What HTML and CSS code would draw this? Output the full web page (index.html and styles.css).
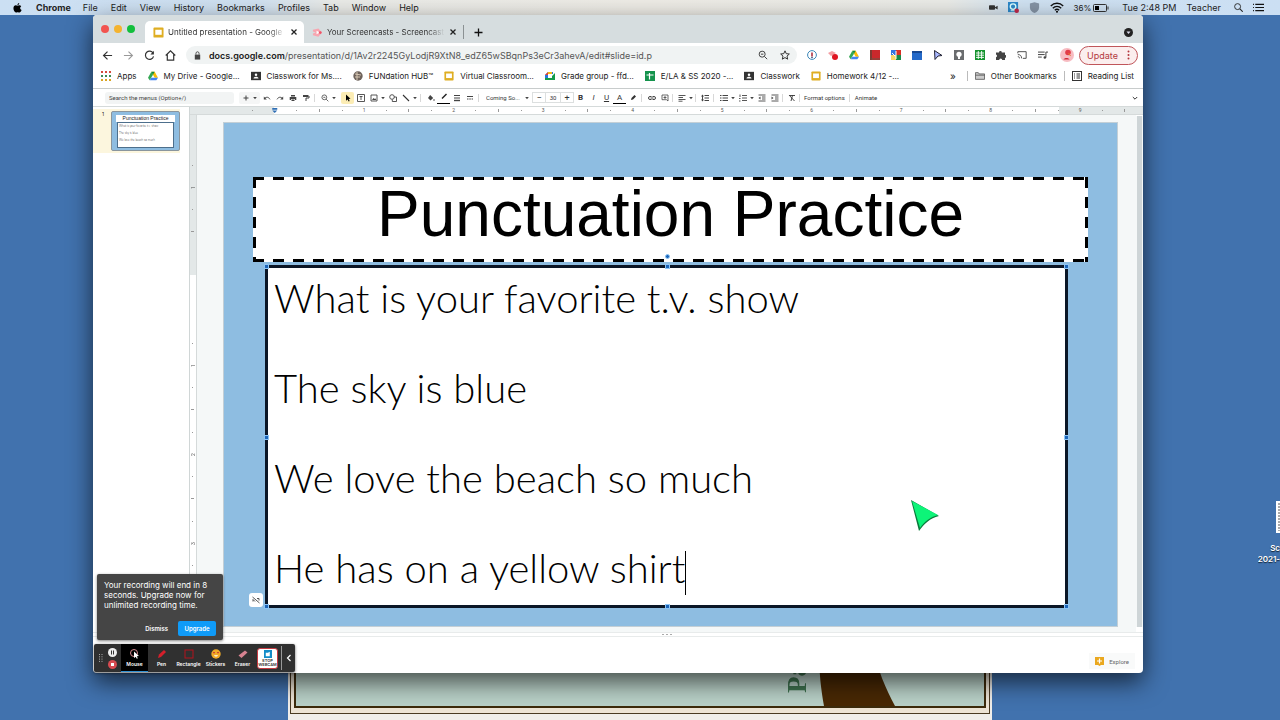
FILE: index.html
```html
<!DOCTYPE html>
<html lang="en">
<head>
    <meta charset="UTF-8">
    <meta name="viewport" content="width=device-width, initial-scale=1.0">
    <title>Untitled presentation - Google Slides</title>
    <link rel="stylesheet" href="styles.css">
</head>
<body>
    <!-- Shared icons -->
    <svg class="sprite" aria-hidden="true">
        <symbol id="i-slides" viewBox="0 0 12 12"><rect x="0.5" y="0.5" width="11" height="11" rx="1" fill="#dfae22"/><rect x="2.5" y="3" width="7" height="5.5" fill="#fff"/></symbol>
        <symbol id="i-class" viewBox="0 0 12 12"><rect y="1" width="12" height="10" fill="#333"/><circle cx="6" cy="4.6" r="1.5" fill="#fff"/><path d="M3 9c0-3 6-3 6 0z" fill="#fff"/></symbol>
        <symbol id="i-drive" viewBox="0 0 12 12"><path d="M4 1h4l4 7H8z" fill="#fbbc04"/><path d="M4 1l2 3.5L2 11 0 8z" fill="#34a853"/><path d="M4 8h8l-2 3H2z" fill="#4285f4"/><path d="M4 1h4L6 4.5z" fill="#0f8b43"/></symbol>
        <symbol id="i-close" viewBox="0 0 8 8"><path d="M1.5 1.5l5 5M6.5 1.5l-5 5" stroke="#222" stroke-width="1.3"/></symbol>
        <symbol id="i-caret" viewBox="0 0 6 6"><path d="M1.2 2h3.6L3 4.2z" fill="#444"/></symbol>
        <symbol id="i-zoom" viewBox="0 0 12 12"><circle cx="5" cy="5" r="3.6" fill="none" stroke="#444" stroke-width="1.2"/><path d="M7.7 7.7L11 11M3.5 5h3" stroke="#444" stroke-width="1.2"/></symbol>
    </svg>

    <header class="menubar">
        <nav class="menubar-left">
            <svg class="apple" viewBox="0 0 12 14"><path d="M8.4 0C8.5 1.6 7.3 3 5.9 3.1 5.8 1.6 7 .2 8.4 0zM6 3.9c.8 0 1.4-.6 2.6-.6 1.1 0 2 .5 2.6 1.4-2.2 1.3-1.9 4.3.5 5.2-.6 1.7-1.8 3.5-3.1 3.5-.9 0-1.3-.6-2.400-.6s-1.500.6-2.400.6C2 13.400.3 10.200.3 7.500c0-2.600 1.600-4.200 3.300-4.200 1 0 1.700.6 2.400.6z"/></svg>
            <b>Chrome</b><span>File</span><span>Edit</span><span>View</span><span>History</span><span>Bookmarks</span><span>Profiles</span><span>Tab</span><span>Window</span><span>Help</span>
        </nav>
        <div class="menubar-right">
            <svg class="ic9" viewBox="0 0 12 10"><g fill="#333"><rect y="2" width="8" height="6" rx="1"/><path d="M8 4.500l3.500-2v5L8 5.500z"/></g></svg>
            <svg class="ic12" viewBox="0 0 12 12"><rect width="11" height="11" fill="#2b87c8"/><circle cx="5.500" cy="5" r="3" fill="none" stroke="#dff" stroke-width="1.500"/><path d="M3 9.500h5" stroke="#dff"/><circle cx="9.500" cy="9.500" r="2.500" fill="#c0284a"/></svg>
            <svg class="ic12" viewBox="0 0 12 12"><path d="M1 1.500L6 .3l5 1.200V6c0 3-2.500 5-5 6-2.500-1-5-3-5-6z" fill="#8493a5"/></svg>
            <svg class="ic14" viewBox="0 0 14 11"><g fill="none" stroke="#111" stroke-width="1.400"><path d="M.8 4c3.500-3.600 8.900-3.600 12.400 0M2.800 6.200c2.400-2.400 6-2.400 8.400 0M4.800 8.300c1.300-1.200 3.100-1.200 4.400 0"/></g><circle cx="7" cy="9.800" r="1"/></svg>
            <span class="power">36%
                <svg class="battery" viewBox="0 0 16 8"><rect x=".5" y=".5" width="13" height="7" rx="1" fill="none" stroke="#333"/><rect x="2" y="2" width="4" height="4"/><path d="M15 2.500v3" stroke="#333"/></svg>
            </span>
            <span>Tue 2:48 PM</span>
            <span class="user">Teacher</span>
            <svg class="ic9" viewBox="0 0 10 10"><circle cx="4" cy="4" r="3.300" fill="none" stroke="#222"/><path d="M6.500 6.500L9.700 9.700" stroke="#222" stroke-width="1.200"/></svg>
            <svg class="ic12" viewBox="0 0 12 10"><path d="M0 1.500h1M0 5h1M0 8.500h1M2.500 1.500H12M2.500 5H12M2.500 8.500H12" stroke="#111" stroke-width="1.300"/></svg>
        </div>
    </header>

    <!-- Document lying behind the browser -->
    <div class="poster">
        <div class="poster-line">
            <div class="poster-art">
                <svg class="trunk" viewBox="0 0 80 57"><path d="M0 0c0 24 2 40 5 57h71C67 40 58 20 55 0z" fill="#482804"/></svg>
                <span class="poster-text">Pa</span>
            </div>
        </div>
    </div>

    <div class="desktop-file">
        <svg viewBox="0 0 12 32"><rect width="12" height="32" fill="#fff"/><path d="M3 2v28M4 5h8M4 9h8M4 13h8M4 17h8M4 21h8M4 25h8" stroke="#555" stroke-dasharray="2 1"/></svg>
        <span>Sc</span><span>2021-</span>
    </div>

    <main class="window">
        <div class="tabstrip">
            <div class="lights"><i class="red"></i><i class="yellow"></i><i class="green"></i></div>
            <div class="tab active">
                <svg class="ic12"><use href="#i-slides"/></svg>
                <span class="tab-title">Untitled presentation - Google</span>
                <button aria-label="Close tab"><svg class="ic8"><use href="#i-close"/></svg></button>
            </div>
            <div class="tab">
                <svg class="ic12" viewBox="0 0 12 12"><path d="M1 3l6-1.500L11 6 7 10.500 1 9V7l3-1-3-1z" fill="#f7a6b0"/><path d="M5 4l3.500 2L5 8z" fill="#fff"/><circle cx="9" cy="6" r="1.500" fill="#ee5468"/></svg>
                <span class="tab-title">Your Screencasts - Screencast</span>
                <button aria-label="Close tab"><svg class="ic8"><use href="#i-close"/></svg></button>
            </div>
            <button class="new-tab" aria-label="New tab"><svg class="ic9" viewBox="0 0 9 9"><path d="M4.500.5v8M.5 4.500h8" stroke="#111" stroke-width="1.300"/></svg></button>
            <button class="tab-search" aria-label="Search tabs"><svg class="ic9" viewBox="0 0 9 9"><circle cx="4.500" cy="4.500" r="4.500" fill="#222"/><path d="M2.500 3.500h4l-2 2.600z" fill="#dde"/></svg></button>
        </div>

        <div class="address-row">
            <button aria-label="Back"><svg class="ic12" viewBox="0 0 12 12"><path d="M11 6H2M6 1.700L1.700 6 6 10.300" fill="none" stroke="#333" stroke-width="1.300"/></svg></button>
            <button aria-label="Forward"><svg class="ic12" viewBox="0 0 12 12"><path d="M1 6h9M6 1.700L10.300 6 6 10.300" fill="none" stroke="#999" stroke-width="1.200"/></svg></button>
            <button aria-label="Reload"><svg class="ic12" viewBox="0 0 12 12"><path d="M10 3.500A4.500 4.500 0 1 0 10.400 7" fill="none" stroke="#333" stroke-width="1.300"/><path d="M10.800.8v4H7z" fill="#333"/></svg></button>
            <button aria-label="Home"><svg class="ic12" viewBox="0 0 12 12"><path d="M.8 6L6 1l5.200 5M2.500 5v6h7V5" fill="none" stroke="#333" stroke-width="1.300"/></svg></button>
            <div class="omnibox">
                <svg class="ic9" viewBox="0 0 9 10"><rect x="1.500" y="4" width="6" height="5.500" fill="#444"/><path d="M2.800 4V2.500c0-2.200 3.400-2.200 3.400 0V4" fill="none" stroke="#444"/></svg>
                <span class="url"><b>docs.google.com</b>/presentation/d/1Av2r2245GyLodjR9XtN8_edZ65wSBqnPs3eCr3ahevA/edit#slide=id.p</span>
                <svg class="ic10"><use href="#i-zoom"/></svg>
                <svg class="ic10" viewBox="0 0 12 12"><path d="M6 1l1.500 3.400 3.700.4-2.800 2.500.8 3.700L6 9.100 2.800 11l.8-3.700L.8 4.800l3.700-.4z" fill="none" stroke="#333" stroke-width="1.200"/></svg>
            </div>
            <div class="extensions">
                <svg class="ic10" viewBox="0 0 10 10"><circle cx="5" cy="5" r="4.400" fill="#fff" stroke="#3c87b8"/><path d="M5 2.500v4" stroke="#a23" stroke-width="1.500"/><circle cx="5" cy="7.500" r=".8" fill="#247"/></svg>
                <svg class="ic10" viewBox="0 0 10 10"><path d="M0 3l4-2 4 2-5 3z" fill="#f39da2"/><circle cx="7" cy="7" r="3" fill="#df1420"/></svg>
                <svg class="ic10"><use href="#i-drive"/></svg>
                <svg class="ic10" viewBox="0 0 10 10"><path d="M0 0h10v10H0z" fill="#c9282c"/><path d="M0 0h2v10H0z" fill="#7c3a32"/><path d="M1 9h9" stroke="#654"/></svg>
                <svg class="ic10" viewBox="0 0 10 10"><path d="M0 0h5v5H0z" fill="#3474df"/><path d="M5 0h5v5H5z" fill="#d93025"/><path d="M0 5h5v5H0z" fill="#f8d568"/><path d="M5 5h5v5H5z" fill="#188a48"/><path d="M1 3l3 3M5 1v8" stroke="#fff"/></svg>
                <svg class="ic10" viewBox="0 0 10 10"><path d="M0 1h10v9H0z" fill="#2469c9"/><path d="M0 1h10v2H0z" fill="#174892"/></svg>
                <svg class="ic10" viewBox="0 0 10 10"><path d="M1.500.5l7.500 5-4 .5-3 3.500z" fill="#a9b8ff" stroke="#223"/></svg>
                <svg class="ic10" viewBox="0 0 10 10"><path d="M0 0h10v10H0z" fill="#6a6c6e"/><circle cx="5" cy="4.300" r="2.600" fill="#fff"/><path d="M4 6h2v3H4z" fill="#fff"/></svg>
                <svg class="ic10" viewBox="0 0 10 10"><path d="M0 0h10v10H0z" fill="#15932e"/><path d="M1 3h8M1 5.200h8M1 7.400h8M3.300 1v8M6.600 1v8" stroke="#fff" stroke-width=".9"/></svg>
                <svg class="ic10" viewBox="0 0 10 10"><path d="M0 2.500h3a1.400 1.400 0 1 1 2.800 0H9v2.700a1.400 1.400 0 1 1 0 2.400V10H6.200a1.500 1.500 0 0 0-3 0H0V7.300a1.400 1.400 0 0 0 0-2.700z" fill="#444"/></svg>
                <svg class="ic10" viewBox="0 0 12 10"><path d="M1 3V1h10v8H7M1 4.500c3 0 4.500 1.500 4.500 4.500M1 7c1.300 0 2 .7 2 2" fill="none" stroke="#444" stroke-width="1.100"/></svg>
                <svg class="ic10" viewBox="0 0 12 10"><path d="M0 1.500h8M0 4.500h8M0 7.500h4.500M9.500 8V1.500H12" fill="none" stroke="#444" stroke-width="1.200"/><circle cx="8.200" cy="8" r="1.500" fill="#444"/></svg>
            </div>
            <svg class="avatar" viewBox="0 0 14 14"><circle cx="7" cy="7" r="7" fill="#f7bcc2"/><circle cx="8" cy="4.500" r="2.800" fill="#e23b47"/><path d="M3.500 11.500c1-2 5-2 6 0z" fill="#d32736"/><path d="M8.500 5l2 3" stroke="#e07d2d"/></svg>
            <button class="update">Update <svg class="dots" viewBox="0 0 3 10"><circle cx="1.500" cy="1.500" r="1"/><circle cx="1.500" cy="5" r="1"/><circle cx="1.500" cy="8.500" r="1"/></svg></button>
        </div>

        <nav class="bookmarks">
            <a href="#"><svg class="ic10" viewBox="0 0 10 10"><g stroke-width="2" stroke-dasharray="2 2"><path d="M0 1h10" stroke="#d64a3c"/><path d="M0 5h10" stroke="#3d8a55"/><path d="M0 9h10" stroke="#d9a423"/></g></svg>Apps</a>
            <a href="#"><svg class="ic10"><use href="#i-drive"/></svg>My Drive - Google...</a>
            <a href="#"><svg class="ic10"><use href="#i-class"/></svg>Classwork for Ms....</a>
            <a href="#"><svg class="ic10" viewBox="0 0 10 10"><circle cx="5" cy="5" r="4.700" fill="#6d625b"/><path d="M2 3l6 1M2 6h5M4 1v8" stroke="#d8c8b4"/></svg>FUNdation HUB™</a>
            <a href="#"><svg class="ic10"><use href="#i-slides"/></svg>Virtual Classroom...</a>
            <a href="#"><svg class="ic10" viewBox="0 0 10 10"><path d="M0 4l3-3h5v2H3v5H0z" fill="#2577df"/><path d="M3 1h4v2H3z" fill="#f7b914"/><path d="M0 7h7V5l3-3v7H0z" fill="#159b4a"/><path d="M3 3.500h3v3H3z" fill="#fff"/><path d="M0 4l3-3v3z" fill="#e13d35"/></svg>Grade group - ffd...</a>
            <a href="#"><svg class="ic10" viewBox="0 0 10 10"><path d="M0 0h10v10H0z" fill="#15934d"/><path d="M1.500 4h7M4.500 2v6.500" stroke="#fff" stroke-width="1.200"/></svg>E/LA &amp; SS 2020 -...</a>
            <a href="#"><svg class="ic10"><use href="#i-class"/></svg>Classwork</a>
            <a href="#"><svg class="ic10"><use href="#i-slides"/></svg>Homework 4/12 -...</a>
            <button class="more" aria-label="More bookmarks">»</button>
            <a class="divided" href="#"><svg class="ic10" viewBox="0 0 12 10"><path d="M.5 9V1H4l1 1.500h6.500V9z" fill="#ccc" stroke="#555"/><path d="M.5 4h11" stroke="#555"/></svg>Other Bookmarks</a>
            <a class="divided" href="#"><svg class="ic10" viewBox="0 0 10 10"><rect x=".5" y=".5" width="9" height="9" fill="none" stroke="#333"/><path d="M2 3h1M2 5h1M2 7h1M4.500 3H8M4.500 5H8M4.500 7H8" stroke="#333"/></svg>Reading List</a>
        </nav>

        <div class="toolbar">
            <input class="menu-search" type="text" aria-label="Search the menus" placeholder="Search the menus (Option+/)">
            <div class="new-slide">
                <button aria-label="New slide"><svg class="ic8" viewBox="0 0 8 8"><path d="M4 1.500v5M1.500 4h5" stroke="#444"/></svg></button>
                <button class="caret" aria-label="Layouts"><svg class="ic6"><use href="#i-caret"/></svg></button>
            </div>
            <button aria-label="Undo"><svg class="ic8" viewBox="0 0 8 8"><path d="M1.500 4.500c2-2 4-1.500 5.500.8" fill="none" stroke="#444"/><path d="M.8 2.500v3h3z" fill="#444"/></svg></button>
            <button aria-label="Redo"><svg class="ic8" viewBox="0 0 8 8"><path d="M6.500 4.500C4.500 2.500 2.500 3 1 5.300" fill="none" stroke="#444"/><path d="M7.200 2.500v3h-3z" fill="#444"/></svg></button>
            <button aria-label="Print"><svg class="ic8" viewBox="0 0 8 8"><path d="M2 1h4v1.500H2zM.7 3h6.600v3H6V5H2v1H.7zM2.500 5.500h3V7h-3z" fill="#444"/></svg></button>
            <button aria-label="Paint format"><svg class="ic8" viewBox="0 0 8 8"><path d="M1 1h5v2H1z" fill="#444"/><path d="M6 2h1v2H4v3" fill="none" stroke="#444"/></svg></button>
            <i class="sep"></i>
            <button aria-label="Zoom"><svg class="ic8"><use href="#i-zoom"/></svg></button>
            <button class="caret" aria-label="Zoom levels"><svg class="ic6"><use href="#i-caret"/></svg></button>
            <button class="selected" aria-label="Select"><svg class="ic8" viewBox="0 0 8 8"><path d="M2 .5l4.500 4.300-1.900.2L5.700 7l-1 .5L3.600 5.500 2 6.800z"/></svg></button>
            <button aria-label="Text box"><svg class="ic8" viewBox="0 0 8 8"><path d="M.5.500h7v7h-7zM2.500 2.500h3M4 2.500v3.500" fill="none" stroke="#444" stroke-width=".9"/></svg></button>
            <button aria-label="Insert image"><svg class="ic8" viewBox="0 0 8 8"><path d="M1 1h6v6H1z" fill="none" stroke="#444" stroke-width=".9"/><path d="M2 6l1.500-2L4.500 5l.7-.8L6.300 6z" fill="#444"/></svg></button>
            <button class="caret" aria-label="Image options"><svg class="ic6"><use href="#i-caret"/></svg></button>
            <button aria-label="Shape"><svg class="ic8" viewBox="0 0 8 8"><circle cx="3" cy="3" r="2.300" fill="none" stroke="#444" stroke-width=".9"/><path d="M5 3h2.500v4.500H3.300V5.500" fill="none" stroke="#444" stroke-width=".9"/></svg></button>
            <button aria-label="Line"><svg class="ic8" viewBox="0 0 8 8"><path d="M1 1l6 6" stroke="#333" stroke-width="1.100"/></svg></button>
            <button class="caret" aria-label="Line types"><svg class="ic6"><use href="#i-caret"/></svg></button>
            <i class="sep"></i>
            <button aria-label="Fill color"><svg class="ic8" viewBox="0 0 8 8"><path d="M3.200 1l3 3-2.700 2.500L1 4z" fill="#444"/><circle cx="7" cy="6" r=".8" fill="#444"/></svg></button>
            <button class="inked" aria-label="Border color"><svg class="ic8" viewBox="0 0 8 8"><path d="M2 5.500L6.500 1" stroke="#222" stroke-width="1.500"/></svg></button>
            <button aria-label="Border weight"><svg class="ic8" viewBox="0 0 8 8"><path d="M1 1.500h6M1 4h6" stroke="#444"/><path d="M1 6.500h6" stroke="#444" stroke-width="1.400"/></svg></button>
            <button aria-label="Border dash"><svg class="ic8" viewBox="0 0 8 8"><path d="M1 2.500h6" stroke="#444"/><path d="M1 5h6" stroke="#444" stroke-dasharray="1.500 .8"/></svg></button>
            <i class="sep"></i>
            <select class="font-name" aria-label="Font"><option>Coming So...</option></select>
            <svg class="ic6"><use href="#i-caret"/></svg>
            <div class="size-box">
                <button aria-label="Smaller">−</button><input type="text" aria-label="Font size" value="30"><button aria-label="Larger">+</button>
            </div>
            <button class="glyph" aria-label="Bold"><b>B</b></button>
            <button class="glyph" aria-label="Italic"><em>I</em></button>
            <button class="glyph" aria-label="Underline"><u>U</u></button>
            <button class="glyph inked" aria-label="Text color">A</button>
            <button aria-label="Highlight color"><svg class="ic8" viewBox="0 0 8 8"><path d="M2 6l.5-2L5.500 1 7 2.500l-3 3z" fill="#333"/></svg></button>
            <i class="sep"></i>
            <button aria-label="Link"><svg class="ic8" viewBox="0 0 8 8"><path d="M3.500 2.500H2a1.500 1.500 0 0 0 0 3h1.500M4.500 2.500H6a1.500 1.500 0 0 1 0 3H4.500M2.500 4h3" fill="none" stroke="#444"/></svg></button>
            <button aria-label="Comment"><svg class="ic8" viewBox="0 0 8 8"><path d="M1 1h6v6L5.500 5.700H1zM4 2v3M2.500 3.500h3" fill="none" stroke="#444" stroke-width=".8"/></svg></button>
            <i class="sep tight"></i>
            <button aria-label="Align"><svg class="ic8" viewBox="0 0 8 8"><path d="M.5 1.500h7M.5 3.500h4.500M.5 5.500h7M.5 7.200h4" stroke="#444" stroke-width=".9"/></svg></button>
            <button class="caret" aria-label="Align options"><svg class="ic6"><use href="#i-caret"/></svg></button>
            <i class="sep tight"></i>
            <button aria-label="Line spacing"><svg class="ic8" viewBox="0 0 8 8"><path d="M1.500 1v6M3.500 1.500H8M3.500 4H8M3.500 6.500H8" stroke="#444"/><path d="M0 2.500L1.500.500 3 2.500zM0 5.500l1.500 2 1.500-2z" fill="#444"/></svg></button>
            <i class="sep"></i>
            <button aria-label="Bulleted list"><svg class="ic8" viewBox="0 0 8 8"><path d="M0 1.500h1.500M0 4h1.500M0 6.500h1.500M2.500 1.500H8M2.500 4H8M2.500 6.500H8" stroke="#444"/></svg></button>
            <button class="caret" aria-label="Bullet styles"><svg class="ic6"><use href="#i-caret"/></svg></button>
            <button aria-label="Numbered list"><svg class="ic8" viewBox="0 0 8 8"><path d="M1 .5v2.500M0 4.500h1.500M0 7h1.500M3 1.500h5M3 4h5M3 6.500h5" stroke="#444" stroke-width=".9"/></svg></button>
            <button class="caret" aria-label="Number styles"><svg class="ic6"><use href="#i-caret"/></svg></button>
            <button aria-label="Decrease indent"><svg class="ic8" viewBox="0 0 8 8"><path d="M.5 1h7M4 3h3.500M4 5h3.500M.5 7h7" stroke="#444" stroke-width=".9"/><path d="M2.500 2.500v3L.5 4z" fill="#444"/></svg></button>
            <button aria-label="Increase indent"><svg class="ic8" viewBox="0 0 8 8"><path d="M.5 1h7M4 3h3.500M4 5h3.500M.5 7h7" stroke="#444" stroke-width=".9"/><path d="M.5 2.500v3l2-1.500z" fill="#444"/></svg></button>
            <i class="sep tight"></i>
            <button aria-label="Clear formatting"><svg class="ic8" viewBox="0 0 8 8"><path d="M1.500 1.500H7M4.500 1.500L3 7M1 1l5.500 6" stroke="#333" stroke-width=".9"/></svg></button>
            <i class="sep tight"></i>
            <button class="text-btn">Format options</button>
            <i class="sep"></i>
            <button class="text-btn">Animate</button>
            <button class="collapse" aria-label="Hide the menus"><svg class="ic6" viewBox="0 0 6 6"><path d="M.8 2L3 4.200 5.200 2" fill="none" stroke="#333"/></svg></button>
        </div>

        <div class="editor">
            <aside class="filmstrip">
                <div class="film-item">
                    <span>1</span>
                    <div class="thumb">
                        <div class="thumb-title">Punctuation Practice</div>
                        <div class="thumb-body"><p>What is your favorite t.v. show</p><p>The sky is blue</p><p>We love the beach so much</p></div>
                    </div>
                </div>
            </aside>
            <div class="stage">
                <div class="ruler-h">
                    <svg class="marker" viewBox="0 0 6 6"><path d="M0 0h6v2H0zM0 3h6L3 6z" fill="#2f6fb5"/></svg><span>1</span><span>2</span><span>3</span><span>4</span><span>5</span><span>6</span><span>7</span><span>8</span><span>9</span>
                </div>
                <div class="stage-row">
                    <div class="ruler-v"><span>1</span><span></span><span>1</span><span>2</span><span>3</span></div>
                    <div class="canvas">
                        <section class="slide">
                            <h1 class="slide-title">Punctuation Practice</h1>
                            <div class="slide-body">
                                <p>What is your favorite t.v. show</p>
                                <p>The sky is blue</p>
                                <p>We love the beach so much</p>
                                <p>He has on a yellow shirt<i class="text-caret"></i></p>
                                <i class="handle nw"></i><i class="handle n"></i><i class="handle ne"></i><i class="handle w"></i><i class="handle e"></i><i class="handle sw"></i><i class="handle s"></i><i class="handle se"></i><i class="handle turn"></i>
                                <button class="autofit" aria-label="Autofit options"><svg class="ic8" viewBox="0 0 8 8"><path d="M.5 1l7 6M1 5.500V3.500l2 2M5 2.500h2v2" fill="none" stroke="#444" stroke-width=".9"/></svg></button>
                            </div>
                        </section>
                    </div>
                    <div class="scrollbar"></div>
                </div>
            </div>
        </div>
        <div class="splitter"><i></i><i></i><i></i></div>
        <footer class="notes">
            <button class="explore"><svg class="ic9" viewBox="0 0 9 9"><path d="M0 0h9v8H6L4.500 9 3 8H0z" fill="#eaa81f"/><path d="M4.500 1.500v5M2 4h5" stroke="#fff" stroke-width="1.200"/></svg>Explore</button>
        </footer>

        <div class="toast">
            <p>Your recording will end in 8 seconds. Upgrade now for unlimited recording time.</p>
            <div class="toast-actions"><button>Dismiss</button><button class="primary">Upgrade</button></div>
        </div>

        <div class="recorder">
            <svg class="grip" viewBox="0 0 4 8"><path d="M0 .5h4M0 2.800h4M0 5.100h4M0 7.400h4" stroke="#aaa" stroke-dasharray="1 1.500"/></svg>
            <div class="record-controls">
                <button aria-label="Pause"><svg class="ic9" viewBox="0 0 9 9"><circle cx="4.500" cy="4.500" r="4.500" fill="#eee"/><path d="M3.500 2.500v4M5.500 2.500v4" stroke="#333"/></svg></button>
                <button aria-label="Stop"><svg class="ic9" viewBox="0 0 9 9"><circle cx="4.500" cy="4.500" r="4.500" fill="#d84a50"/><path d="M3 3h3v3H3z" fill="#fff"/></svg></button>
            </div>
            <button class="tool on"><svg class="ic10" viewBox="0 0 10 10"><circle cx="4" cy="4" r="3.500" fill="none" stroke="#d88a90"/><path d="M4 2.500l5 4.500-2.200.2 1 2-1 .5-1-2L4 9z" fill="#fff"/></svg>Mouse</button>
            <button class="tool"><svg class="ic10" viewBox="0 0 10 10"><path d="M1 9l1-3.500L7 1l2 2-5 5z" fill="#d51f2b"/></svg>Pen</button>
            <button class="tool"><svg class="ic10" viewBox="0 0 10 10"><rect x="1" y="1" width="8" height="8" fill="none" stroke="#b3131d"/></svg>Rectangle</button>
            <button class="tool"><svg class="ic10" viewBox="0 0 10 10"><circle cx="5" cy="5" r="4.700" fill="#f2ab27"/><path d="M2 3h2v1.200H2zM6 3h2v1.200H6z" fill="#c43"/><path d="M3 6.200h4c-.5 1.800-3.500 1.800-4 0z" fill="#fff"/></svg>Stickers</button>
            <button class="tool"><svg class="ic10" viewBox="0 0 10 10"><path d="M.5 6.500L7 1.500l2.500 2L3.500 9z" fill="#d78290"/></svg>Eraser</button>
            <button class="webcam"><svg class="ic8" viewBox="0 0 9 9"><rect width="9" height="9" fill="#148cc8"/><path d="M2 3h2.500l2-1v5H2z" fill="#fff"/></svg><span>STOP<br>WEBCAM</span></button>
            <button class="fold" aria-label="Collapse"><svg class="ic8" viewBox="0 0 8 8"><path d="M5.500 1L2.500 4l3 3" fill="none" stroke="#fff" stroke-width="1.200"/></svg></button>
        </div>
    </main>

    <svg class="pointer" viewBox="0 0 30 34"><path d="M1 1l28 16c-9 2-15 8-20 15z" fill="#0a7a3c"/><path d="M2 2l26 14c-8 2-14 7-18 13z" fill="#0df478"/></svg>
</body>
</html>
```
FILE: styles.css
```css
* {
    box-sizing: border-box;
}
body {
    margin: 0;
    height: 100vh;
    position: relative;
    overflow: hidden;
    background: #4172ae;
    font-family: Inter, "Open Sans", sans-serif;
    font-size: 8px;
    color: #222;
}
button, input, select {
    margin: 0;
    padding: 0;
    border: none;
    background: none;
    font: inherit;
    color: inherit;
}
button {
    display: flex;
    align-items: center;
    justify-content: center;
    white-space: nowrap;
}
svg {
    display: block;
    flex: none;
}
a {
    color: inherit;
    text-decoration: none;
}
p, h1 {
    margin: 0;
    font-weight: normal;
}
.sprite {
    position: absolute;
    width: 0;
    height: 0;
}
.ic6 { width: 6px; height: 6px; }
.ic8 { width: 8px; height: 8px; }
.ic9 { width: 9px; height: 9px; }
.ic10 { width: 10px; height: 10px; }
.ic12 { width: 11px; height: 11px; }
.ic14 { width: 14px; height: 11px; }

/* Menu bar */
.menubar {
    display: flex;
    justify-content: space-between;
    height: 15px;
    padding: 0 16px 0 13px;
    background: linear-gradient(90deg, #cbdff3 0, #cfe0f0 20%, #e9eae7 26%, #edebe5 50%, #e9eae6 74%, #cfe1f1 80%, #cbdff3 100%);
    font-size: 9px;
}
.menubar-left, .menubar-right {
    display: flex;
    align-items: center;
    gap: 13px;
}
.menubar-left b {
    margin-left: 1px;
    margin-right: -1px;
}
.menubar-right {
    gap: 10px;
}
.user {
    margin-right: 3px;
}
.apple {
    width: 9px;
    height: 10px;
}
.power {
    display: flex;
    align-items: center;
    gap: 2px;
    font-size: 8px;
    margin-right: 3px;
}
.battery {
    width: 16px;
    height: 8px;
}

/* Desktop */
.poster {
    position: absolute;
    left: 288px;
    right: 288px;
    bottom: 0;
    height: 100px;
    padding: 0 2px 6px;
    background: #f0eeea;
}
.poster-line {
    height: 100%;
    padding: 0 3px 5px;
    border: 1px solid #4a3a22;
    background: #ede4d5;
}
.poster-art {
    position: relative;
    height: 100%;
    border: 2px solid #3d2b0c;
    background: #b9d1c8;
}
.trunk {
    position: absolute;
    right: 85px;
    bottom: 0;
    width: 80px;
    height: 57px;
}
.poster-text {
    position: absolute;
    right: 173px;
    bottom: 13px;
    writing-mode: vertical-rl;
    transform: rotate(180deg);
    font: bold 27px/27px "Liberation Serif", serif;
    color: #3f7350;
}
.desktop-file {
    position: absolute;
    right: 0;
    top: 501px;
    display: flex;
    flex-direction: column;
    align-items: flex-end;
    overflow: hidden;
    color: #fff;
    font-size: 8px;
    font-weight: 600;
    line-height: 11px;
    text-shadow: 0 1px 1px #123;
}
.desktop-file svg {
    width: 12px;
    height: 32px;
    margin: 0 -8px 10px 0;
}

/* Browser window */
.window {
    position: absolute;
    top: 15px;
    left: 93px;
    right: 137px;
    bottom: 47px;
    display: flex;
    flex-direction: column;
    border-radius: 4px;
    background: #fff;
    box-shadow: 0 9px 24px rgba(0, 0, 0, 0.65);
}
.tabstrip {
    display: flex;
    align-items: flex-end;
    height: 28px;
    padding-left: 8px;
    border-radius: 4px 4px 0 0;
    background: #d6dddf;
}
.lights {
    display: flex;
    gap: 5px;
    width: 44px;
    align-self: center;
}
.lights i {
    width: 8px;
    height: 8px;
    border-radius: 50%;
}
.red { background: #f2544f; }
.yellow { background: #f4b32e; }
.green { background: #12bf3c; }
.tab {
    display: flex;
    align-items: center;
    width: 159px;
    height: 22px;
    padding: 0 6px 0 8px;
    gap: 4px;
    border-radius: 5px 5px 0 0;
}
.tab.active {
    background: #fff;
}
.tab-title {
    flex: 1;
    overflow: hidden;
    white-space: nowrap;
    font-size: 8px;
    color: #333;
    -webkit-mask-image: linear-gradient(90deg, #000 85%, transparent);
    mask-image: linear-gradient(90deg, #000 85%, transparent);
}
.new-tab {
    height: 14px;
    margin-bottom: 4px;
    padding-left: 10px;
    border-left: 1px solid #8b9193;
}
.tab-search {
    height: 22px;
    margin: 0 10px 0 auto;
}

.address-row {
    display: flex;
    align-items: center;
    height: 24px;
    padding: 0 5px 0 9px;
    gap: 10px;
}
.omnibox {
    flex: 1;
    display: flex;
    align-items: center;
    gap: 12px;
    height: 18px;
    min-width: 0;
    padding: 0 7px;
    border-radius: 9px;
    background: #f0f3f3;
}
.omnibox > :first-child {
    margin-right: -5px;
}
.url {
    flex: 1;
    overflow: hidden;
    white-space: nowrap;
    font-size: 9px;
    color: #555;
}
.url b {
    font-weight: 600;
    color: #222;
}
.extensions {
    display: flex;
    gap: 11px;
    margin-right: 2px;
}
.avatar {
    width: 14px;
    height: 14px;
    margin-right: -5px;
}
.update {
    gap: 9px;
    width: 59px;
    height: 19px;
    border: 1px solid #c0555a;
    border-radius: 10px;
    background: #fbeeee;
    font-size: 9px;
    color: #b3373d;
}
.dots {
    width: 3px;
    height: 10px;
    fill: #b3373d;
}

.bookmarks {
    display: flex;
    align-items: center;
    height: 22px;
    padding: 0 9px 3px 8px;
    gap: 11px;
    border-bottom: 1px solid #c8cccc;
    font-size: 8px;
    white-space: nowrap;
}
.bookmarks a {
    display: flex;
    align-items: center;
    gap: 6px;
}
.more {
    margin-left: auto;
    font-size: 10px;
}
.bookmarks .divided {
    padding-left: 7px;
    border-left: 1px solid #bbb;
}
.bookmarks .divided + .divided {
    margin-left: -4px;
}

/* Slides toolbar */
.toolbar {
    display: flex;
    align-items: center;
    height: 18px;
    padding: 0 5px 0 12px;
    border-bottom: 1px solid #d5dada;
    font-family: Roboto, sans-serif;
    font-size: 6px;
    color: #333;
}
.toolbar button {
    flex: none;
    width: 13px;
    height: 12px;
}
.toolbar .caret {
    width: 6px;
}
.toolbar .text-btn {
    width: auto;
    padding: 0 2px;
}
.toolbar .collapse {
    margin-left: auto;
    width: 6px;
}
.menu-search {
    width: 129px;
    height: 12px;
    padding: 0 4px;
    margin-right: 5px;
    border-radius: 3px;
    background: #f2f4f4;
}
.menu-search::placeholder {
    color: #444;
}
.new-slide {
    display: flex;
    padding-right: 2px;
    border-radius: 2px;
    background: #f5f6f6;
}
.sep {
    flex: none;
    width: 1px;
    height: 8px;
    margin: 0 3px 0 2px;
    background: #d8d8d8;
}
.tight {
    margin: 0 2px 0 1px;
}
.selected {
    margin-left: 4px;
    border-radius: 2px;
    background: #fcedb5;
}
.toolbar .inked {
    border-bottom: 1px solid #000;
}
.font-name {
    width: 42px;
    height: 12px;
    padding-left: 4px;
    appearance: none;
}
.size-box {
    display: flex;
    margin-left: 2px;
    border: 1px solid #dcdfdf;
}
.toolbar .size-box button {
    width: 12px;
    height: 9px;
    font-size: 9px;
}
.size-box input {
    width: 16px;
    height: 9px;
    border: solid #dcdfdf;
    border-width: 0 1px;
    text-align: center;
}
.glyph {
    font-size: 8px;
}

/* Editor */
.editor {
    flex: 1;
    display: flex;
    min-height: 0;
}
.filmstrip {
    width: 97px;
    padding-top: 2px;
    border-right: 1px solid #d0d6d6;
}
.film-item {
    display: flex;
    width: 87px;
    padding: 2px 0 2px 9px;
    background: #fcf6de;
    font-size: 5px;
}
.film-item span {
    width: 9px;
}
.thumb {
    flex: 1;
    height: 40px;
    padding: 3px 4px;
    border: 1px solid #8a959d;
    border-radius: 2px;
    background: #8ebde1;
}
.thumb-title {
    height: 7px;
    background: #fff;
    font: 5px/7px "Liberation Sans", sans-serif;
    text-align: center;
}
.thumb-body {
    height: 26px;
    margin: 0 1px;
    padding: 0 1px;
    border: 1px solid #4d6f8c;
    background: #fff;
    font: 3px/7px "Lato Light", Lato, sans-serif;
}
.stage {
    flex: 1;
    display: flex;
    flex-direction: column;
    min-width: 0;
}
.ruler-h {
    display: flex;
    align-items: center;
    flex: none;
    height: 8px;
    padding: 0 18px 0 40px;
    border-bottom: 1px solid #d5dada;
    background: linear-gradient(90deg, #e3e8e8 84px, transparent 84px), linear-gradient(270deg, #e3e8e8 84px, #fff 84px);
    font: 5px/6px Roboto, sans-serif;
    color: #555;
}
.ruler-h > * {
    flex: 1;
    height: 5px;
    line-height: 5px;
    text-align: center;
    background: linear-gradient(#999, #999) 25% 50% / 1px 1px no-repeat, linear-gradient(#999, #999) 75% 50% / 1px 1px no-repeat, linear-gradient(#999, #999) 100% 50% / 1px 3px no-repeat;
}
.stage-row {
    flex: 1;
    display: flex;
    min-height: 0;
}
.ruler-v {
    width: 7px;
    padding-top: 28px;
    overflow: hidden;
    border-right: 1px solid #d5dada;
    background: linear-gradient(#e3e8e8 160px, #fff 160px);
    font: 5px/6px Roboto, sans-serif;
    color: #555;
}
.ruler-v span {
    display: flex;
    justify-content: center;
    height: 89px;
    writing-mode: vertical-rl;
    transform: rotate(180deg);
    background: linear-gradient(#999, #999) 50% 25% / 1px 1px no-repeat, linear-gradient(#999, #999) 50% 75% / 1px 1px no-repeat, linear-gradient(#999, #999) 50% 0 / 3px 1px no-repeat;
}
.canvas {
    flex: 1;
    padding: 7px 18px 5px 26px;
    background: #f5f8f8;
}
.slide {
    display: flex;
    flex-direction: column;
    gap: 3px;
    height: 100%;
    padding: 54px 29px 18px;
    border: 1px solid #c3cfd6;
    background: #8ebde1;
}
.slide-title {
    flex: none;
    height: 85px;
    background:
        repeating-linear-gradient(90deg, #000 0 11px, transparent 11px 20px) top / 100% 3px no-repeat,
        repeating-linear-gradient(90deg, #000 0 11px, transparent 11px 20px) bottom / 100% 3px no-repeat,
        repeating-linear-gradient(#000 0 11px, transparent 11px 20px) left / 3px 100% no-repeat,
        repeating-linear-gradient(#000 0 11px, transparent 11px 20px) right / 3px 100% no-repeat,
        #fff;
    font: 64px/74px "Liberation Sans", Arial, sans-serif;
    text-align: center;
    color: #000;
}
.slide-body {
    position: relative;
    flex: 1;
    display: flex;
    flex-direction: column;
    gap: 46px;
    margin: 0 20px 0 12px;
    padding: 8px 6px 0;
    border: 3px solid #0b1626;
    background: #fff;
    font: 40px/44px "Lato Light", Lato, sans-serif;
    color: #000;
}
.text-caret {
    display: inline-block;
    width: 1px;
    height: 44px;
    vertical-align: middle;
    background: #000;
}
.handle {
    position: absolute;
    width: 5px;
    height: 5px;
    border: 1px solid #8ec5f5;
    background: #1c65b8;
}
.nw, .n, .ne { top: -4px; }
.sw, .s, .se { bottom: -4px; }
.w, .e { top: calc(50% - 2px); }
.nw, .w, .sw { left: -4px; }
.ne, .e, .se { right: -4px; }
.n, .s, .turn { left: calc(50% - 2px); }
.turn {
    top: -14px;
    border-radius: 50%;
}
.autofit {
    position: absolute;
    left: -19px;
    bottom: -2px;
    width: 14px;
    height: 14px;
    border-radius: 3px;
    background: #fff;
}
.scrollbar {
    width: 7px;
    margin: 1px 0 5px;
    border: solid #f5f8f8;
    border-width: 0 1px;
    background: #ced5d7;
}
.splitter {
    display: flex;
    align-items: center;
    justify-content: center;
    gap: 2px;
    flex: none;
    height: 5px;
    padding-left: 97px;
    border: solid #e8ebeb;
    border-width: 1px 0;
}
.splitter i {
    width: 2px;
    height: 1px;
    background: #aaa;
}
.notes {
    display: flex;
    align-items: flex-end;
    justify-content: flex-end;
    flex: none;
    height: 36px;
    padding: 0 8px 4px;
}
.explore {
    gap: 5px;
    height: 16px;
    padding: 0 6px;
    background: #f9fafa;
    font: 6px Roboto, sans-serif;
    color: #666;
}

/* Recorder overlays */
.toast {
    position: absolute;
    left: 4px;
    bottom: 33px;
    width: 126px;
    padding: 6px 7px 4px;
    border-radius: 2px;
    background: #454545;
    color: #fff;
    font: 8px/10px Inter, sans-serif;
    box-shadow: 0 1px 3px rgba(0, 0, 0, 0.5);
}
.toast-actions {
    display: flex;
    justify-content: flex-end;
    gap: 10px;
    margin-top: 11px;
    font-size: 6px;
    font-weight: 600;
}
.toast-actions .primary {
    width: 38px;
    height: 15px;
    border-radius: 2px;
    background: #0f9bf8;
}
.recorder {
    position: absolute;
    left: 1px;
    bottom: 1px;
    display: flex;
    align-items: center;
    width: 201px;
    height: 28px;
    padding-left: 5px;
    border-radius: 2px;
    background: #303030;
    color: #fff;
    font: 600 5px/6px Inter, sans-serif;
    box-shadow: 0 1px 3px rgba(0, 0, 0, 0.6);
}
.grip {
    width: 4px;
    height: 8px;
}
.record-controls {
    display: flex;
    flex-direction: column;
    gap: 3px;
    margin: 0 4px 0 5px;
}
.tool {
    flex-direction: column;
    gap: 2px;
    width: 27px;
    height: 100%;
}
.tool.on {
    background: #000;
    border-bottom: 1px solid #2f8fd0;
}
.webcam {
    flex-direction: column;
    gap: 1px;
    width: 21px;
    height: 21px;
    margin-left: 1px;
    border: 1px solid #c63a42;
    border-radius: 3px;
    background: #fff;
    color: #333;
    font-size: 4px;
    line-height: 4px;
}
.fold {
    height: 24px;
    margin-left: 3px;
    padding-left: 3px;
    border-left: 1px solid #999;
}
.pointer {
    position: absolute;
    left: 910px;
    top: 499px;
    width: 30px;
    height: 34px;
}
```
